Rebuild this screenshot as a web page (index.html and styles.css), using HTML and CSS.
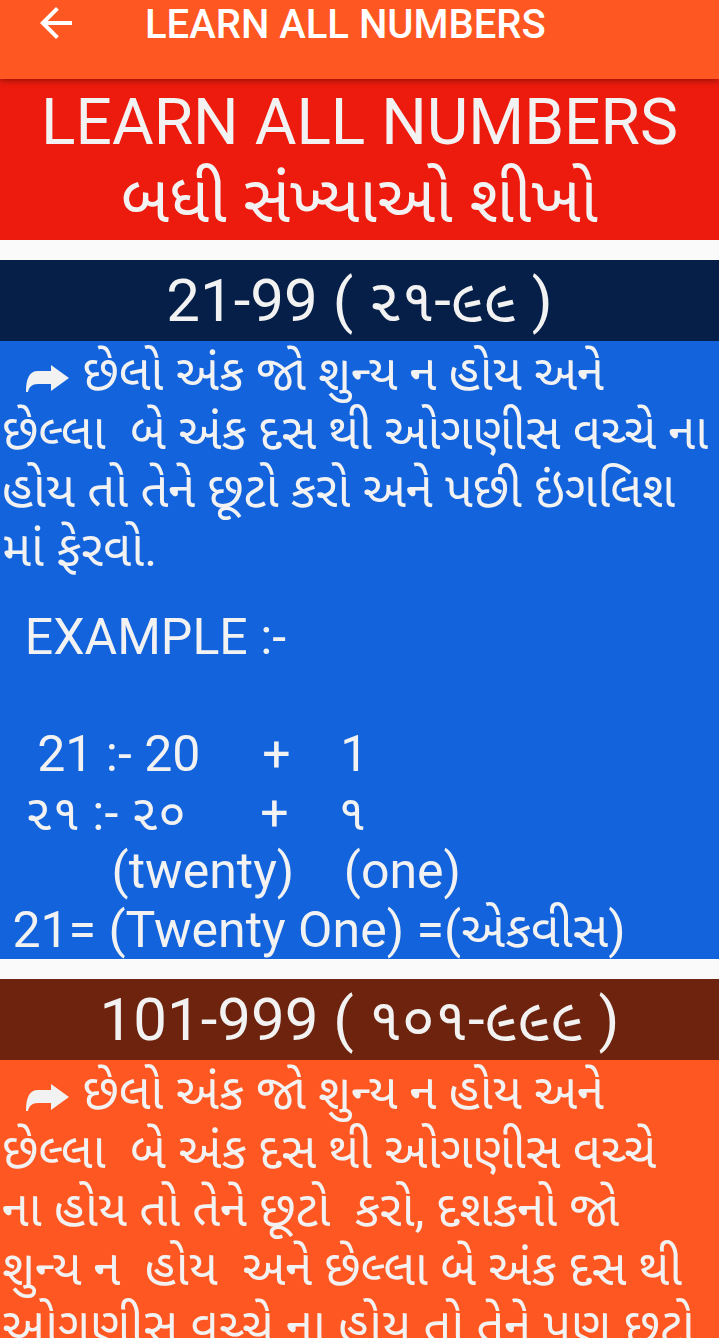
FILE: index.html
```html
<!DOCTYPE html>
<html>
<head>
<meta charset="utf-8">
<link rel="stylesheet" href="styles.css">
</head>
<body>
<header class="appbar">
  <span class="back">
    <svg viewBox="0 0 24 24" width="48" height="48"><path fill="#fff" d="M20 11H7.83l5.59-5.59L12 4l-8 8 8 8 1.41-1.41L7.83 13H20v-2z"/></svg>
  </span>
  <h1 class="appbar-title">LEARN ALL NUMBERS</h1>
</header>
<main class="content">
  <section class="banner">
    <div class="banner-en">LEARN ALL NUMBERS</div>
    <div class="banner-gu">બધી સંખ્યાઓ શીખો</div>
  </section>

  <section class="card">
    <div class="card-head navy">21-99 ( ૨૧-૯૯ )</div>
    <div class="card-body blue">
<div class="para"><span class="ind">  </span><svg class="arrow" viewBox="0 0 44 27"><path fill="#f2f2f2" d="M25 0 L43 13 L25 26 L25 19 L12 19 C6 19 3 22 2 27 L0 27 C0 14 3 6 12 6 L25 6 Z"/></svg> છેલો અંક જો શુન્ય ન હોય અને
છેલ્લા  બે અંક દસ થી ઓગણીસ વચ્ચે ના
હોય તો તેને છૂટો કરો અને પછી ઇંગલિશ
માં ફેરવો.</div>
<div class="example">  EXAMPLE :-

   21 :- 20     +    1
  ૨૧ :- ૨૦      +    ૧
         (twenty)    (one)
 21= (Twenty One) =(એકવીસ)</div>
    </div>
  </section>

  <section class="card">
    <div class="card-head brown">101-999 ( ૧૦૧-૯૯૯ )</div>
    <div class="card-body orange">
<div class="para"><span class="ind">  </span><svg class="arrow" viewBox="0 0 44 27"><path fill="#f2f2f2" d="M25 0 L43 13 L25 26 L25 19 L12 19 C6 19 3 22 2 27 L0 27 C0 14 3 6 12 6 L25 6 Z"/></svg> છેલો અંક જો શુન્ય ન હોય અને
છેલ્લા  બે અંક દસ થી ઓગણીસ વચ્ચે
ના હોય તો તેને છૂટો  કરો, દશકનો જો
શુન્ય ન  હોય  અને છેલ્લા બે અંક દસ થી
ઓગણીસ વચ્ચે ના હોય તો તેને પણ છૂટો</div>
    </div>
  </section>
</main>
</body>
</html>
```
FILE: styles.css
```css
* { box-sizing: border-box; margin: 0; padding: 0; }
html, body {
  width: 719px;
  height: 1338px;
  overflow: hidden;
  background: #fafafa;
  font-family: Roboto, "Noto Sans", "Noto Sans Gujarati", sans-serif;
  color: #f2f2f2;
}
.appbar {
  position: relative;
  z-index: 2;
  height: 79px;
  background: #ff5722;
  display: flex;
  align-items: flex-start;
  box-shadow: 0 2px 6px rgba(0,0,0,0.35);
}
.back {
  display: flex;
  margin: -1px 0 0 32px;
}
.appbar-title {
  margin: 0 0 0 65px;
  font-weight: 500;
  font-size: 40px;
  line-height: 50px;
  color: #fff;
}
.content { display: flex; flex-direction: column; }
.banner {
  background: #ed1b0e;
  height: 161px;
  text-align: center;
  padding-top: 6px;
}
.banner-en {
  font-size: 64px;
  line-height: 76px;
}
.banner-gu {
  font-size: 66px;
  line-height: 78px;
}
.card { margin-top: 20px; }
.card-head {
  height: 81px;
  text-align: center;
  font-size: 60px;
  line-height: 76px;
  padding-top: 3px;
}
.navy { background: #051f48; }
.brown { background: #6d230d; }
.blue { background: #1263dc; }
.orange { background: #ff5722; height: 400px; }
.card-body {
  font-size: 50px;
  line-height: 58.5px;
  padding-top: 4px;
}
.para, .example { white-space: pre; }
.para {
  padding-left: 2px;
  font-size: 49px;
  line-height: 58.5px;
}
.arrow {
  width: 44px;
  height: 27px;
  vertical-align: -2px;
}
.example {
  margin-top: 29px;
}
```
